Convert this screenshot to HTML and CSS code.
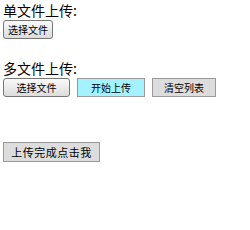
FILE: index.html
```html
<!DOCTYPE html>
<html lang="zh">
<head>
    <meta charset="UTF-8">
    <title>文件上传</title>
    <link rel="stylesheet" href="styles.css">
</head>
<body>
    <div class="upload-block">
        <div class="label">单文件上传:</div>
        <button class="btn btn-pick">选择文件</button>
    </div>

    <div class="upload-block multi">
        <div class="label">多文件上传:</div>
        <div class="btn-row">
            <button class="btn btn-pick wide">选择文件</button>
            <button class="btn btn-start">开始上传</button>
            <button class="btn btn-clear">清空列表</button>
        </div>
    </div>

    <div class="done-block">
        <button class="btn btn-done">上传完成点击我</button>
    </div>
</body>
</html>
```

FILE: styles.css
```css
body {
    margin: 0;
    padding: 2px 3px;
    font-family: "Noto Sans CJK SC", "DejaVu Sans", sans-serif;
    color: #000;
    background: #fff;
}

.label {
    font-size: 14px;
    line-height: 17px;
}

.btn {
    display: block;
    font-family: "Noto Sans CJK SC", sans-serif;
    font-size: 10px;
    color: #000;
    height: 19px;
    padding: 0;
    line-height: 17px;
    white-space: nowrap;
    text-align: center;
    cursor: pointer;
}

.btn-pick {
    background: linear-gradient(#fafafa, #dcdcdc);
    border: 1px solid #777;
    border-radius: 3px;
    width: 50px;
    margin-top: 1px;
}

.btn-pick.wide {
    width: 67px;
    margin-top: 0;
}

.upload-block.multi {
    margin-top: 21px;
}

.btn-row {
    display: flex;
    gap: 7px;
    margin-top: 1px;
}

.btn-start {
    width: 68px;
    height: 19px;
    background-color: #a4f2ff;
    border: 1px solid #999;
    border-radius: 0;
}

.btn-clear {
    width: 64px;
    height: 19px;
    background-color: #ddd;
    border: 1px solid #999;
    border-radius: 0;
}

.done-block {
    margin-top: 45px;
}

.btn-done {
    width: 97px;
    height: 20px;
    font-size: 11px;
    letter-spacing: 0.5px;
    background-color: #ddd;
    border: 1px solid #999;
    border-radius: 0;
}
```
